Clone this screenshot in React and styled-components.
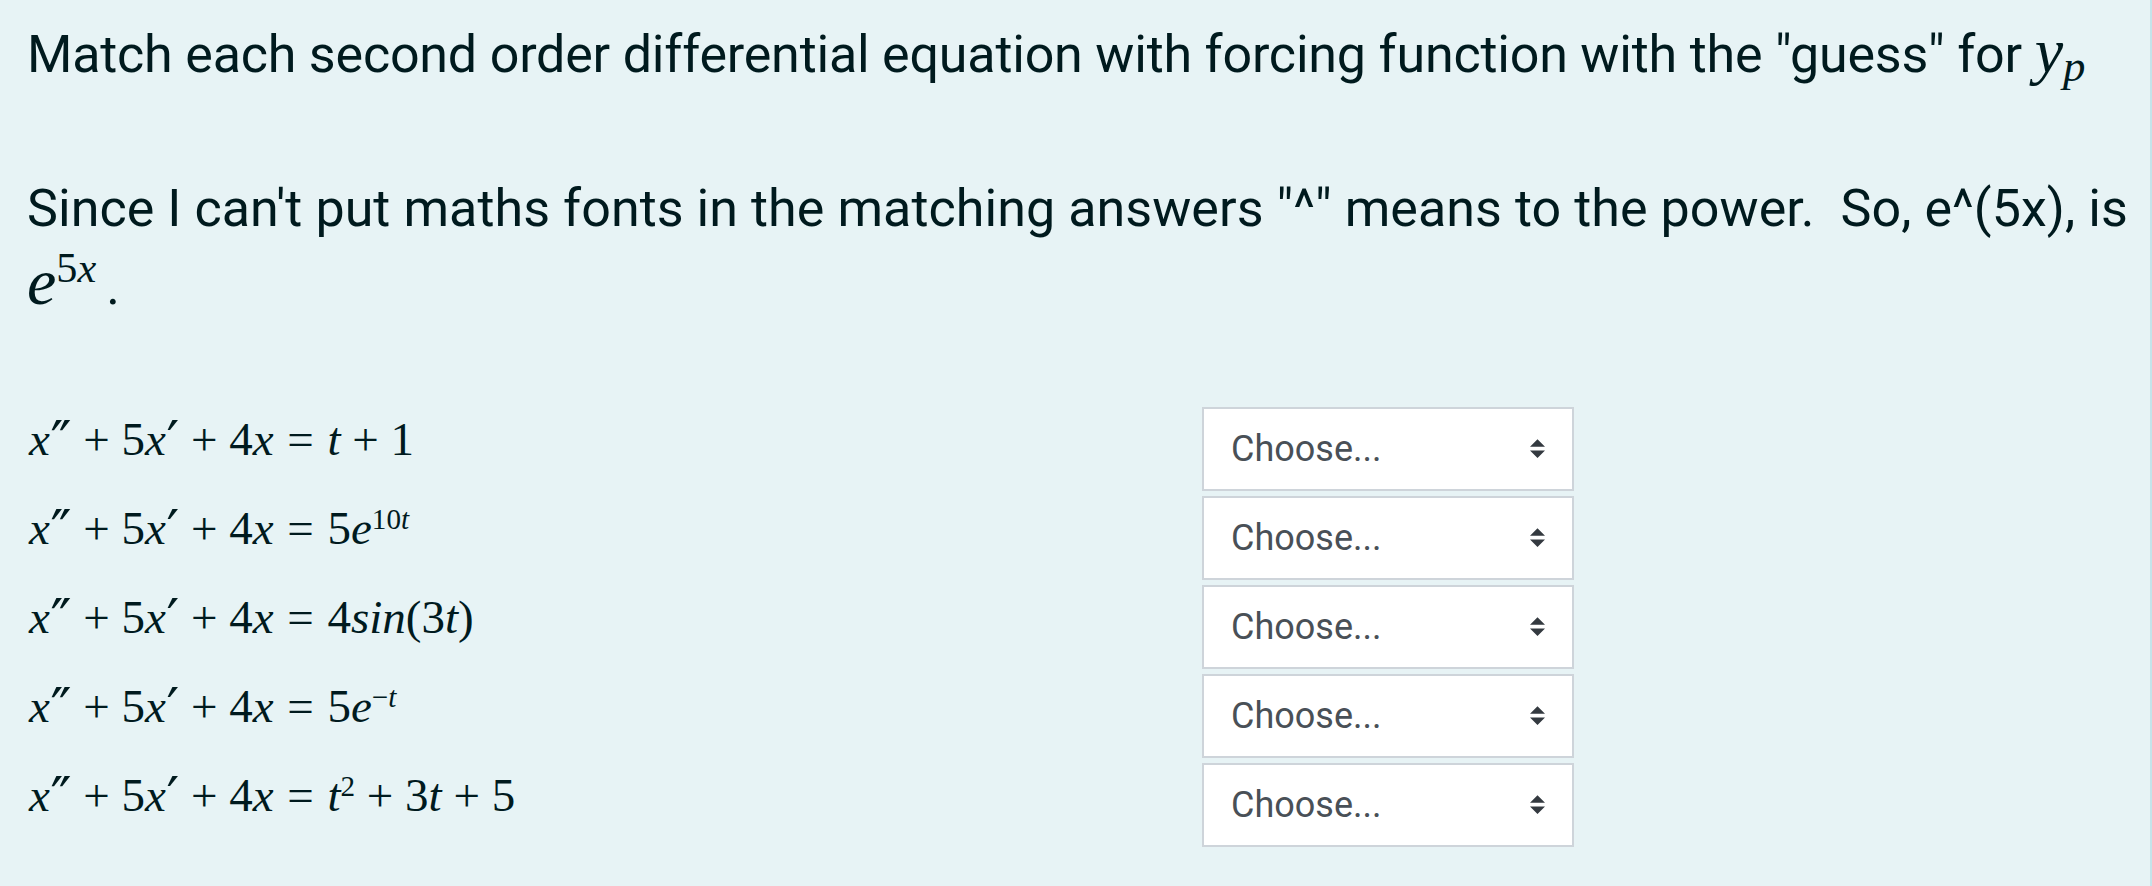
import React from 'react'
import styled, { createGlobalStyle } from 'styled-components'

const GlobalStyle = createGlobalStyle`
  body {
    margin: 0;
    background: #e7f3f5;
  }
`

const Formulation = styled.div`
  width: 2152px;
  height: 886px;
  box-sizing: border-box;
  padding: 17px 0 0 27px;
  background: #e7f3f5;
  border-right: 2px solid #c4e4ea;
  color: #001a1e;
  font-family: Roboto, "Liberation Sans", sans-serif;
  overflow: hidden;
`

const QText = styled.p`
  margin: 0 0 ${p => p.$gap || 0}px;
  font-size: 52px;
  line-height: 76px;
  letter-spacing: ${p => p.$track || 0}px;
`

const MathInline = styled.span`
  font-family: "Liberation Serif", "Times New Roman", serif;
  font-size: ${p => p.$size || 64}px;
  line-height: 1;
  letter-spacing: 0;
  margin-right: ${p => p.$after || 0}px;
`

const V = styled.span`
  font-style: italic;
`

const Prime = styled.span`
  font-family: "DejaVu Serif", serif;
  font-size: 1.2em;
  line-height: 0;
  vertical-align: -0.1em;
  margin-left: 0.01em;
`

const Sup = styled.span`
  font-size: ${p => p.$size || 0.68}em;
  vertical-align: ${p => p.$raise || 0.42}em;
  line-height: 1;
`

const Sub = styled.span`
  font-size: 0.7em;
  font-style: italic;
  vertical-align: -0.2em;
  line-height: 1;
`

const Op = styled.span`
  margin: 0 ${p => (p.$rel ? 0.29 : 0.25)}em;
`

const Matches = styled.div`
  display: grid;
  grid-template-columns: 1173px 372px;
  row-gap: 5px;
  margin-top: 82px;
  padding-left: 2px;
`

const EqCell = styled.div`
  height: 84px;
  font-family: "Liberation Serif", "Times New Roman", serif;
  font-size: 47px;
  line-height: 64px;
  white-space: nowrap;
`

const SelectBox = styled.div`
  height: 84px;
  box-sizing: border-box;
  display: flex;
  align-items: center;
  justify-content: space-between;
  padding: 0 27px 0 27px;
  background: #fff;
  border: 2px solid #ced4da;
  color: #495057;
  font-family: Roboto, "Liberation Sans", sans-serif;
  font-size: 36px;
  cursor: pointer;
`

const Arrows = () => (
  <svg width="15" height="19" viewBox="0 0 4 5" fill="#343a40">
    <path d="M2 0L0 2h4zm0 5L0 3h4z" />
  </svg>
)

const Lhs = () => (
  <>
    <V>x</V><Prime>″</Prime>
    <Op>+</Op>5<V>x</V><Prime>′</Prime>
    <Op>+</Op>4<V>x</V>
    <Op $rel>=</Op>
  </>
)

const equations = [
  <><Lhs /><V>t</V><Op>+</Op>1</>,
  <><Lhs />5<V>e</V><Sup $size={0.62} $raise={0.5}>10<V>t</V></Sup></>,
  <><Lhs />4<V>sin</V>(3<V>t</V>)</>,
  <><Lhs />5<V>e</V><Sup $size={0.62} $raise={0.5}>−<V>t</V></Sup></>,
  <><Lhs /><V>t</V><Sup $size={0.62} $raise={0.5}>2</Sup><Op>+</Op>3<V>t</V><Op>+</Op>5</>,
]

export default function App() {
  return (
    <>
      <GlobalStyle />
      <Formulation>
        <QText $gap={78} $track={-0.2}>
          Match each second order differential equation with forcing function with the "guess" for{' '}
          <MathInline>
            <V>y</V>
            <Sub>p</Sub>
          </MathInline>
        </QText>
        <QText $track={0.06}>
          Since I can't put maths fonts in the matching answers "^" means to the power.&nbsp; So, e^(5x), is
          <br />
          <MathInline $size={66} $after={10}>
            <V>e</V>
            <Sup $size={0.64} $raise={0.52}>
              5<V>x</V>
            </Sup>
          </MathInline>
          .
        </QText>
        <Matches>
          {equations.map((eq, i) => (
            <React.Fragment key={i}>
              <EqCell>{eq}</EqCell>
              <SelectBox>
                <span>Choose...</span>
                <Arrows />
              </SelectBox>
            </React.Fragment>
          ))}
        </Matches>
      </Formulation>
    </>
  )
}
